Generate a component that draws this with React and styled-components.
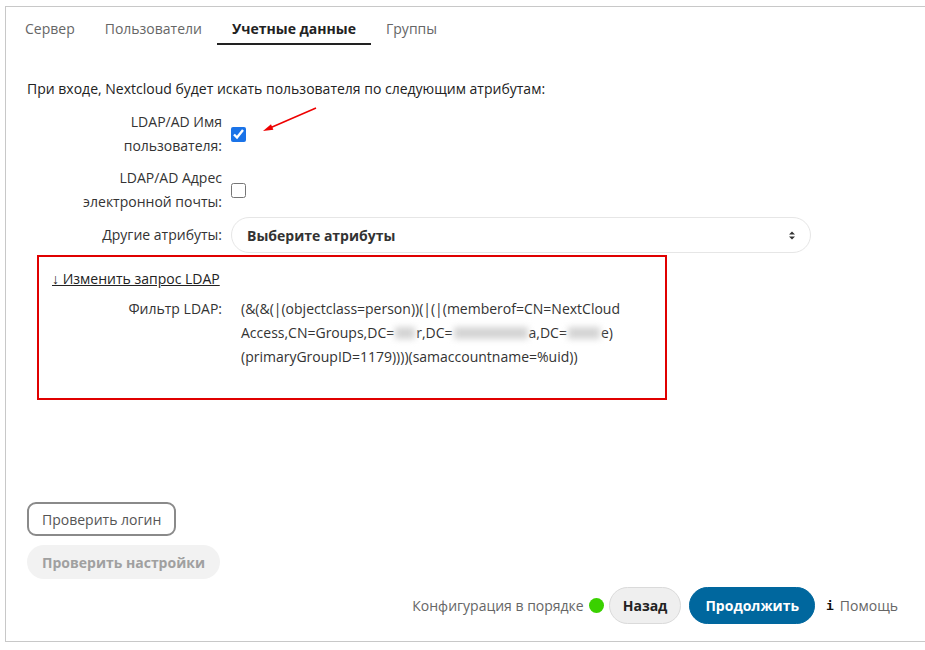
import styled, { createGlobalStyle } from 'styled-components';

const GlobalStyle = createGlobalStyle`
  body {
    margin: 0;
    background: #fff;
    font-family: "Open Sans", "Noto Sans", sans-serif;
    color: #222;
  }
`;

const Frame = styled.div`
  position: relative;
  margin: 6px 0 0 5px;
  height: 636px;
  box-sizing: border-box;
  border: 1px solid #c8c8c8;
  border-right: none;
  display: flex;
  flex-direction: column;
`;

const Tabs = styled.nav`
  display: flex;
  padding-left: 4px;
`;

const Tab = styled.div`
  padding: 12px 15px 4px;
  line-height: 20px;
  font-size: 14px;
  font-weight: ${(p) => (p.$active ? 700 : 400)};
  color: ${(p) => (p.$active ? '#222' : '#666')};
  border-bottom: 2px solid ${(p) => (p.$active ? '#222' : 'transparent')};
`;

const Content = styled.div`
  padding: 0 0 0 21px;
  flex: 1;
  display: flex;
  flex-direction: column;
`;

const Intro = styled.p`
  margin: 34px 0 11px;
  font-size: 14px;
  line-height: 20px;
  color: #222;
`;

const FieldRow = styled.div`
  display: grid;
  grid-template-columns: 160px 1fr;
  column-gap: 9px;
  align-items: center;
  margin: 0 0 ${(p) => p.$gap ?? 8}px 35px;
`;

const Label = styled.label`
  text-align: right;
  font-size: 14px;
  line-height: 24px;
  color: #333;
`;

const Check = styled.input`
  width: 15px;
  height: 15px;
  margin: 1px 0 0;
  accent-color: #1a73e8;
`;

const Select = styled.div`
  width: 580px;
  height: 36px;
  box-sizing: border-box;
  border: 1px solid #e6e6e6;
  border-radius: 18px;
  display: flex;
  align-items: center;
  justify-content: space-between;
  padding: 0 14px 0 15px;
  font-size: 14px;
  font-weight: 700;
  color: #333;
`;

const Annotated = styled.div`
  width: 630px;
  height: 145px;
  box-sizing: border-box;
  margin: 2px 0 0 10px;
  border: 2px solid #e00000;
  padding: 10px 13px;
`;

const QueryLink = styled.a`
  display: inline-block;
  font-size: 14px;
  line-height: 20px;
  color: #222;
  text-decoration: underline;
  margin-bottom: 8px;
`;

const FilterRow = styled.div`
  display: grid;
  grid-template-columns: 170px 1fr;
  column-gap: 19px;
  font-size: 14px;
  line-height: 24px;
  color: #333;
`;

const FilterLabel = styled.span`
  text-align: right;
`;

/* redacted part of the DN, smudged out */
const Smudge = styled.span`
  display: inline-block;
  width: ${(p) => p.$w}px;
  height: 12px;
  vertical-align: -1px;
  margin: 0 1px;
  background: #d4d4d4;
  filter: blur(3px);
`;

const Buttons = styled.div`
  margin-top: 102px;
  display: flex;
  flex-direction: column;
  align-items: flex-start;
  gap: 9px;
`;

const OutlineButton = styled.button`
  height: 34px;
  padding: 0 13px;
  border: 2px solid #8a8a8a;
  border-radius: 9px;
  background: #fff;
  font-family: inherit;
  font-size: 14px;
  color: #555;
`;

const MutedButton = styled.button`
  height: 34px;
  padding: 0 15px;
  border: none;
  border-radius: 17px;
  background: #f2f2f2;
  font-family: inherit;
  font-size: 14px;
  font-weight: 700;
  color: #a0a0a0;
`;

const Footer = styled.div`
  margin-top: 8px;
  display: flex;
  align-items: center;
  justify-content: flex-end;
  padding-right: 27px;
  font-size: 14px;
  color: #666;
`;

const Status = styled.span`
  margin-right: 5px;
`;

const Dot = styled.span`
  width: 15px;
  height: 15px;
  border-radius: 50%;
  background: #3ad100;
  margin-right: 5px;
`;

const PillButton = styled.button`
  height: 37px;
  padding: 0 ${(p) => (p.$primary ? 15 : 13)}px;
  border-radius: 19px;
  border: 1px solid ${(p) => (p.$primary ? '#00679e' : '#dadada')};
  background: ${(p) => (p.$primary ? '#00679e' : '#efefef')};
  color: ${(p) => (p.$primary ? '#fff' : '#222')};
  font-family: inherit;
  font-size: 14px;
  font-weight: 700;
  margin-right: 8px;
`;

const InfoIcon = styled.span`
  font-family: "DejaVu Sans Mono", monospace;
  font-weight: 700;
  font-size: 13px;
  color: #111;
  margin: 0 6px 0 3px;
`;

const Arrow = styled.svg`
  position: absolute;
  left: 245px;
  top: 96px;
  pointer-events: none;
`;

function SortGlyph() {
  return (
    <svg width="8" height="9" viewBox="0 0 8 9">
      <path d="M4 0.5 L7 3.5 H1 Z M4 8.5 L7 5.5 H1 Z" fill="#333" />
    </svg>
  );
}

export default function App() {
  return (
    <>
      <GlobalStyle />
      <Frame>
        <Tabs>
          <Tab>Сервер</Tab>
          <Tab>Пользователи</Tab>
          <Tab $active>Учетные данные</Tab>
          <Tab>Группы</Tab>
        </Tabs>
        <Content>
          <Intro>При входе, Nextcloud будет искать пользователя по следующим атрибутам:</Intro>
          <FieldRow>
            <Label htmlFor="login-name">LDAP/AD Имя пользователя:</Label>
            <Check id="login-name" type="checkbox" defaultChecked />
          </FieldRow>
          <FieldRow $gap={3}>
            <Label htmlFor="login-mail">LDAP/AD Адрес электронной почты:</Label>
            <Check id="login-mail" type="checkbox" />
          </FieldRow>
          <FieldRow $gap={0}>
            <Label>Другие атрибуты:</Label>
            <Select>
              Выберите атрибуты
              <SortGlyph />
            </Select>
          </FieldRow>
          <Annotated>
            <QueryLink>↓ Изменить запрос LDAP</QueryLink>
            <FilterRow>
              <FilterLabel>Фильтр LDAP:</FilterLabel>
              <span>
                (&amp;(&amp;(|(objectclass=person))(|(|(memberof=CN=NextCloud Access,CN=Groups,DC=<Smudge $w={20} />r,DC=<Smudge $w={74} />a,DC=<Smudge $w={32} />e)
                (primaryGroupID=1179))))(samaccountname=%uid))
              </span>
            </FilterRow>
          </Annotated>
          <Buttons>
            <OutlineButton>Проверить логин</OutlineButton>
            <MutedButton disabled>Проверить настройки</MutedButton>
          </Buttons>
          <Footer>
            <Status>Конфигурация в порядке</Status>
            <Dot />
            <PillButton>Назад</PillButton>
            <PillButton $primary>Продолжить</PillButton>
            <InfoIcon>i</InfoIcon>
            <span>Помощь</span>
          </Footer>
        </Content>
        <Arrow width="70" height="40" viewBox="0 0 70 40">
          <line x1="65" y1="5" x2="20" y2="24.5" stroke="#e00" strokeWidth="1.5" />
          <path d="M12 28 L22.4 26.8 L20 21.3 Z" fill="#e00" />
        </Arrow>
      </Frame>
    </>
  );
}
